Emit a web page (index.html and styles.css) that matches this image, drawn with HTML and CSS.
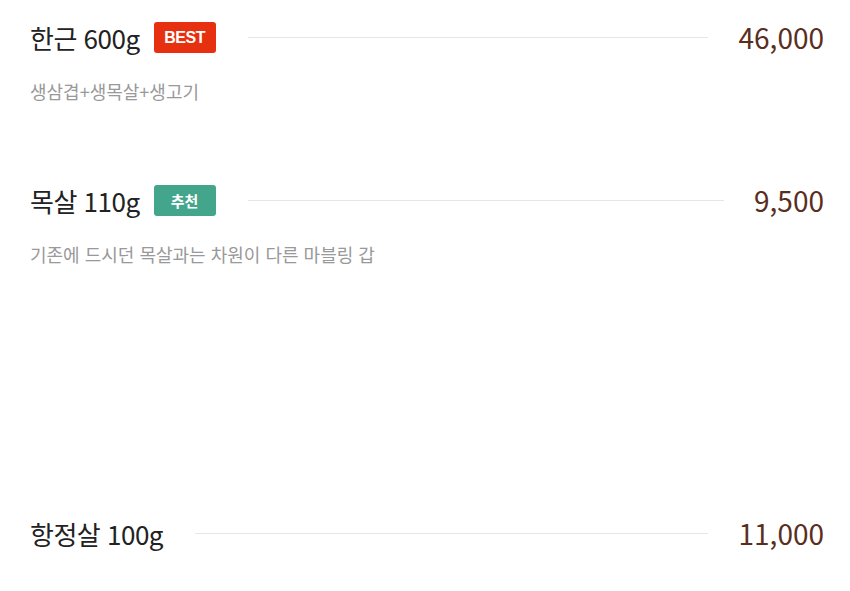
FILE: index.html
```html
<!DOCTYPE html>
<html lang="ko">
<head>
<meta charset="UTF-8">
<meta name="viewport" content="width=device-width, initial-scale=1.0">
<title>메뉴</title>
<link rel="stylesheet" href="styles.css">
</head>
<body>

<div class="menu">
    <div class="item">
        <div class="item-head">
            <span class="name">한근 600g</span>
            <span class="badge best">BEST</span>
            <span class="line"></span>
            <span class="price">46,000</span>
        </div>
        <p class="desc">생삼겹+생목살+생고기</p>
    </div>

    <div class="item">
        <div class="item-head">
            <span class="name">목살 110g</span>
            <span class="badge pick">추천</span>
            <span class="line"></span>
            <span class="price">9,500</span>
        </div>
        <p class="desc">기존에 드시던 목살과는 차원이 다른 마블링 갑</p>
    </div>

    <div class="item item-last">
        <div class="item-head">
            <span class="name">항정살 100g</span>
            <span class="line"></span>
            <span class="price">11,000</span>
        </div>
    </div>
</div>

</body>
</html>
```

FILE: styles.css
```css
body {
    font-family: "Noto Sans CJK KR", "Noto Sans", sans-serif;
    margin: 0;
    padding: 0;
    background-color: #fff;
}
.menu {
    padding: 17px 26px 0 30px;
}

.item {
    margin-bottom: 76px;
}
.item-last {
    margin-top: 246px;
    margin-bottom: 0;
}
.item-head {
    display: flex;
    align-items: center;
    height: 40px;
}
.name {
    font-size: 26px;
    color: #222;
    letter-spacing: -0.5px;
    white-space: nowrap;
}
.badge {
    display: inline-block;
    width: 62px;
    height: 31px;
    line-height: 31px;
    margin-left: 14px;
    border-radius: 3px;
    color: #fff;
    text-align: center;
    font-size: 16px;
    font-weight: bold;
}
.best {
    background-color: #e7300f;
    font-family: "Liberation Sans", Arial, sans-serif;
    letter-spacing: -0.5px;
}
.pick {
    background-color: #43a58c;
    font-size: 15px;
}
.line {
    flex: 1;
    height: 1px;
    background-color: #e6e6e6;
    margin: 0 30px 0 32px;
}
.price {
    font-size: 28px;
    color: #5a2e1e;
    white-space: nowrap;
}
.desc {
    margin: 21px 0 0;
    font-size: 18px;
    color: #999;
}
```
